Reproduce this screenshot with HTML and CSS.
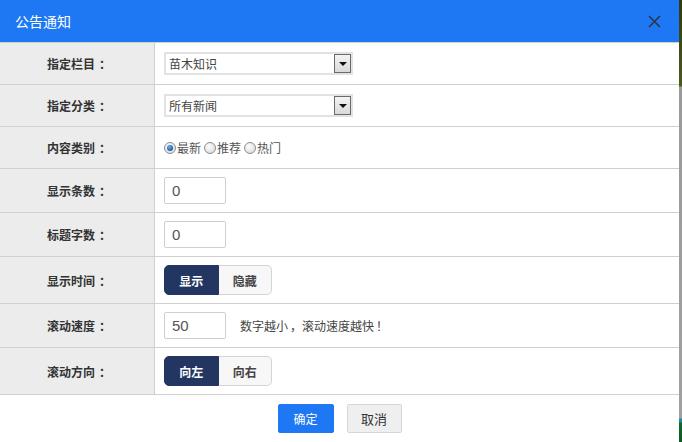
FILE: index.html
```html
<!DOCTYPE html>
<html lang="zh-CN">
<head>
<meta charset="utf-8">
<title>公告通知</title>
<link rel="stylesheet" href="styles.css">
</head>
<body>
<div class="dialog">
  <div class="dlg-head">
    <span class="dlg-title">公告通知</span>
    <span class="dlg-close">
      <svg width="13" height="13" viewBox="0 0 13 13"><path d="M1 1 L12 12 M12 1 L1 12" stroke="#2a3340" stroke-width="1.5" fill="none"/></svg>
    </span>
  </div>
  <table class="form">
    <tr class="r42">
      <td class="lbl">指定栏目<span class="colon">：</span></td>
      <td class="val">
        <div class="sel"><span class="sel-text">苗木知识</span><span class="sel-btn"><i class="tri"></i></span></div>
      </td>
    </tr>
    <tr class="r42">
      <td class="lbl">指定分类<span class="colon">：</span></td>
      <td class="val">
        <div class="sel"><span class="sel-text">所有新闻</span><span class="sel-btn"><i class="tri"></i></span></div>
      </td>
    </tr>
    <tr class="r42">
      <td class="lbl">内容类别<span class="colon">：</span></td>
      <td class="val">
        <div class="radios">
          <label class="radio"><span class="rdot on"></span>最新</label>
          <label class="radio"><span class="rdot"></span>推荐</label>
          <label class="radio"><span class="rdot"></span>热门</label>
        </div>
      </td>
    </tr>
    <tr class="r44">
      <td class="lbl">显示条数<span class="colon">：</span></td>
      <td class="val"><div class="inp">0</div></td>
    </tr>
    <tr class="r44">
      <td class="lbl">标题字数<span class="colon">：</span></td>
      <td class="val"><div class="inp">0</div></td>
    </tr>
    <tr class="r47">
      <td class="lbl">显示时间<span class="colon">：</span></td>
      <td class="val">
        <div class="seg"><span class="seg-item active">显示</span><span class="seg-item">隐藏</span></div>
      </td>
    </tr>
    <tr class="r44">
      <td class="lbl">滚动速度<span class="colon">：</span></td>
      <td class="val">
        <div class="inline"><div class="inp">50</div><span class="hint">数字越小<span class="punct">，</span>滚动速度越快<span class="punct">！</span></span></div>
      </td>
    </tr>
    <tr class="r47">
      <td class="lbl">滚动方向<span class="colon">：</span></td>
      <td class="val">
        <div class="seg"><span class="seg-item active">向左</span><span class="seg-item">向右</span></div>
      </td>
    </tr>
  </table>
  <div class="dlg-foot">
    <button class="btn btn-ok">确定</button>
    <button class="btn btn-cancel">取消</button>
  </div>
</div>
</body>
</html>
```
FILE: styles.css
```css
html, body {
  margin: 0;
  padding: 0;
}
body {
  width: 682px;
  height: 442px;
  overflow: hidden;
  font-family: "Liberation Sans", "Noto Sans CJK SC", sans-serif;
  background: linear-gradient(to bottom, #2f3a12 0, #4a5a1c 86px, #9a9a9a 87px, #a0a0a0 418px, #1f8a9a 419px, #1f8a9a 422px, #0d6a2c 423px, #0b5a25 442px);
}
.dialog {
  width: 679px;
  height: 442px;
  background: #fff;
}
.dlg-head {
  height: 42px;
  background: #1e78f4;
  display: flex;
  align-items: center;
  justify-content: space-between;
  padding: 0 18px 0 15px;
}
.dlg-title {
  color: #fff;
  font-size: 14px;
}
.dlg-close {
  display: flex;
  width: 13px;
  height: 13px;
}
.form {
  width: 679px;
  border-collapse: collapse;
  table-layout: fixed;
}
.form td {
  border: 1px solid #d0d0d0;
  padding: 0;
}
.form td:last-child {
  border-right: none;
}
.form td:first-child {
  border-left: none;
}
.r42 td { height: 41px; }
.r44 td { height: 43px; }
.r47 td { height: 46px; }
.lbl {
  width: 150px;
  padding-left: 4px !important;
  background: #ececec;
  text-align: center;
  font-size: 12px;
  font-weight: bold;
  color: #333;
}
.colon {
  margin-left: 4px;
}
.punct {
  margin-left: 2px;
}
.val {
  padding-left: 9px !important;
}
.sel {
  width: 185px;
  height: 19px;
  border: 2px solid #e2e2e2;
  display: flex;
  align-items: center;
  justify-content: space-between;
  background: #fff;
}
.sel-text {
  font-size: 12px;
  color: #444;
  padding-left: 3px;
}
.sel-btn {
  width: 15px;
  height: 17px;
  border: 1px solid #6a6a6a;
  background: linear-gradient(to bottom, #f4f4f4, #d9d9d9);
  display: flex;
  align-items: center;
  justify-content: center;
}
.tri {
  width: 0;
  height: 0;
  border-left: 4px solid transparent;
  border-right: 4px solid transparent;
  border-top: 4px solid #111;
}
.radios {
  display: flex;
  align-items: center;
  font-size: 12px;
  color: #555;
}
.radio {
  display: flex;
  align-items: center;
  margin-right: 3px;
}
.rdot {
  width: 10px;
  height: 10px;
  border-radius: 50%;
  border: 1px solid #8f8f8f;
  background: radial-gradient(circle at 40% 35%, #fdfdfd, #d6d6d6);
  margin-right: 1px;
  position: relative;
}
.rdot.on::after {
  content: "";
  position: absolute;
  left: 2px;
  top: 2px;
  width: 6px;
  height: 6px;
  border-radius: 50%;
  background: radial-gradient(circle at 40% 35%, #6fb2f0, #1458a8 70%, #0d3d7a);
}
.inp {
  width: 53px;
  height: 25px;
  border: 1px solid #cfcfcf;
  border-radius: 2px;
  padding-left: 7px;
  font-size: 15px;
  line-height: 25px;
  color: #555;
}
.inline {
  display: flex;
  align-items: center;
}
.hint {
  margin-left: 14px;
  font-size: 12px;
  color: #444;
}
.seg {
  display: flex;
  width: 108px;
  height: 30px;
}
.seg-item {
  flex: 1;
  display: flex;
  align-items: center;
  justify-content: center;
  font-size: 12px;
  font-weight: bold;
  color: #444;
  background: #f7f7f7;
  border: 1px solid #d4d4d4;
  border-left: none;
  border-radius: 0 5px 5px 0;
}
.seg-item.active {
  background: #233661;
  color: #fff;
  border: 1px solid #233661;
  border-radius: 5px 0 0 5px;
}
.dlg-foot {
  height: 47px;
  display: flex;
  justify-content: center;
  align-items: center;
  gap: 13px;
}
.btn {
  height: 29px;
  font-family: "Liberation Sans", "Noto Sans CJK SC", sans-serif;
  font-size: 12px;
  padding: 0;
  border-radius: 2px;
  cursor: pointer;
}
.btn-ok {
  width: 56px;
  background: #1e78f4;
  color: #fff;
  border: 1px solid #1e78f4;
}
.btn-cancel {
  width: 55px;
  background: #efefef;
  color: #333;
  border: 1px solid #d6d6d6;
  font-size: 13px;
}
```
